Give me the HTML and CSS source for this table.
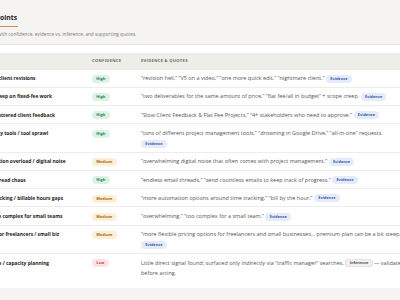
FILE: index.html
```html
<!DOCTYPE html>
<html lang="en">
<head>
<meta charset="utf-8">
<title>Pain Points</title>
<link rel="stylesheet" href="styles.css">
</head>
<body>
<div class="page">
  <header class="head">
    <h1 class="title">Pain Points</h1>
    <div class="accent"></div>
    <p class="sub">Ranked, with confidence, evidence vs. inference, and supporting quotes.</p>
  </header>
  <section class="card">
    <div class="row thead">
      <div class="cell">Issue</div>
      <div class="cell">Confidence</div>
      <div class="cell">Evidence &amp; Quotes</div>
    </div>
    <div class="row">
      <div class="cell name">Endless client revisions</div>
      <div class="cell"><span class="pill high">High</span></div>
      <div class="cell quote">“revision hell,” “V5 on a video,” “one more quick edit,” “nightmare client.” <span class="tag ev">Evidence</span></div>
    </div>
    <div class="row">
      <div class="cell name">Scope creep on fixed-fee work</div>
      <div class="cell"><span class="pill high">High</span></div>
      <div class="cell quote">“two deliverables for the same amount of price,” “flat fee/all in budget” + scope creep. <span class="tag ev">Evidence</span></div>
    </div>
    <div class="row">
      <div class="cell name">Slow, scattered client feedback</div>
      <div class="cell"><span class="pill high">High</span></div>
      <div class="cell quote">“Slow Client Feedback &amp; Flat Fee Projects,” “4+ stakeholders who need to approve.” <span class="tag ev">Evidence</span></div>
    </div>
    <div class="row">
      <div class="cell name">Too many tools / tool sprawl</div>
      <div class="cell"><span class="pill high">High</span></div>
      <div class="cell quote">“tons of different project management tools,” “drowning in Google Drive,” “all-in-one” requests.<br><span class="tag ev">Evidence</span></div>
    </div>
    <div class="row">
      <div class="cell name">Information overload / digital noise</div>
      <div class="cell"><span class="pill med">Medium</span></div>
      <div class="cell quote">“overwhelming digital noise that often comes with project management.” <span class="tag ev">Evidence</span></div>
    </div>
    <div class="row">
      <div class="cell name">Email thread chaos</div>
      <div class="cell"><span class="pill high">High</span></div>
      <div class="cell quote">“endless email threads,” “send countless emails to keep track of progress.” <span class="tag ev">Evidence</span></div>
    </div>
    <div class="row">
      <div class="cell name">Time tracking / billable hours gaps</div>
      <div class="cell"><span class="pill med">Medium</span></div>
      <div class="cell quote">“more automation options around time tracking,” “bill by the hour.” <span class="tag ev">Evidence</span></div>
    </div>
    <div class="row">
      <div class="cell name">Tools are complex for small teams</div>
      <div class="cell"><span class="pill med">Medium</span></div>
      <div class="cell quote">“overwhelming,” “too complex for a small team.” <span class="tag ev">Evidence</span></div>
    </div>
    <div class="row">
      <div class="cell name">Pricing for freelancers / small biz</div>
      <div class="cell"><span class="pill med">Medium</span></div>
      <div class="cell quote">“more flexible pricing options for freelancers and small businesses… premium plan can be a bit steep.” <span class="tag ev">Evidence</span></div>
    </div>
    <div class="row">
      <div class="cell name">Resource / capacity planning</div>
      <div class="cell"><span class="pill low">Low</span></div>
      <div class="cell quote">Little direct signal found; surfaced only indirectly via “traffic manager” searches. <span class="tag inf">Inference</span> — validate before acting.</div>
    </div>
  </section>
</div>
</body>
</html>
```
FILE: styles.css
```css
html, body {
  margin: 0;
  padding: 0;
  overflow: hidden;
  background: #f5f4f2;
}
body {
  font-family: "Open Sans", "Liberation Sans", Arial, sans-serif;
  color: #2a2a2a;
}
.page {
  margin-left: -30px;
  width: 451px;
}
.head {
  padding: 12.5px 0 0 9px;
}
.title {
  margin: 0;
  font-size: 6.8px;
  line-height: 9px;
  font-weight: 700;
  color: #1e1e1e;
}
.accent {
  margin-top: 4px;
  width: 39px;
  height: 1.5px;
  background: #cf8e5c;
  border-radius: 1px;
}
.sub {
  margin: 4px 0 0;
  font-size: 4.7px;
  line-height: 6px;
  color: #7b7b7b;
}
.card {
  margin-top: 7px;
  background: #fff;
  border-top: 1px solid #e7e5e0;
  padding: 8px 0 7px;
}
.row {
  display: grid;
  grid-template-columns: 113px 49px 1fr;
  border-top: 1px solid #efede9;
}
.cell {
  padding: 3.65px 0 3.65px 9px;
  line-height: 10px;
  font-size: 4.9px;
}
.thead {
  background: #efede8;
  border-top: 0;
}
.thead .cell {
  padding: 2.75px 0 2.75px 9px;
  font-size: 4.1px;
  font-weight: 700;
  letter-spacing: 0.3px;
  text-transform: uppercase;
  color: #6d685f;
}
.name {
  font-weight: 700;
  color: #232323;
}
.quote {
  color: #555;
  font-size: 5.5px;
  padding-right: 9px;
}
.pill, .tag {
  display: inline-block;
  height: 8px;
  line-height: 8px;
  padding: 0 4.3px;
  border-radius: 4px;
  font-size: 3.9px;
  font-weight: 700;
  vertical-align: middle;
}
.high { background: #ddf2e6; color: #2d7a52; }
.med { background: #fcefd6; color: #a06d1c; }
.low { background: #fce3e3; color: #b4454b; }
.ev { background: #e4ecfb; color: #3a5aa0; }
.inf {
  background: #f1f0ee;
  color: #555;
  box-shadow: inset 0 0 0 0.6px #d8d6d2;
}
```
